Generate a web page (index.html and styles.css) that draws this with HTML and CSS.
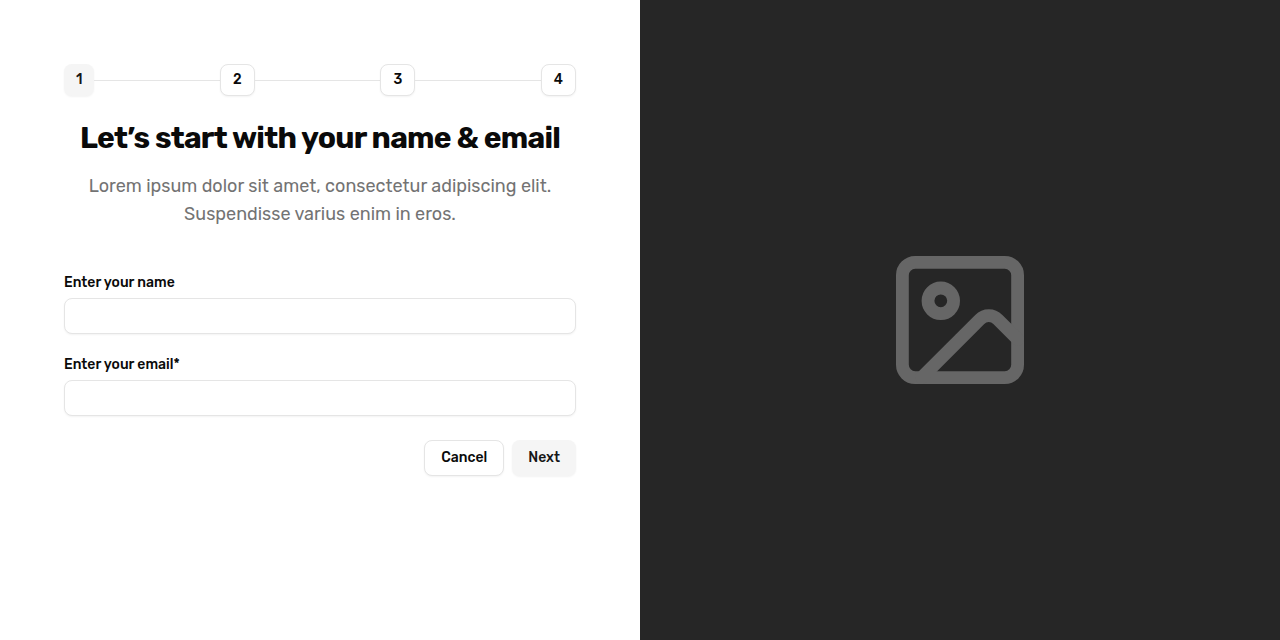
FILE: index.html
```html
<!DOCTYPE html>
<html lang="en">
<head>
<meta charset="utf-8">
<meta name="viewport" content="width=device-width, initial-scale=1">
<title>Sign up</title>
<link rel="stylesheet" href="styles.css">
</head>
<body>
<main class="page">
  <section class="panel">
    <nav class="steps" aria-label="Progress">
      <button type="button" class="button step primary" aria-current="step">1</button>
      <span class="line"></span>
      <button type="button" class="button step">2</button>
      <span class="line"></span>
      <button type="button" class="button step">3</button>
      <span class="line"></span>
      <button type="button" class="button step">4</button>
    </nav>
    <header class="intro">
      <h1 class="title">Let’s start with your name &amp; email</h1>
      <p class="lead">Lorem ipsum dolor sit amet, consectetur adipiscing elit. Suspendisse varius enim in eros.</p>
    </header>
    <form class="form">
      <div class="field">
        <label class="label" for="name">Enter your name</label>
        <input class="input" id="name" name="name" type="text">
      </div>
      <div class="field">
        <label class="label" for="email">Enter your email*</label>
        <input class="input" id="email" name="email" type="email" required>
      </div>
      <div class="actions">
        <button type="button" class="button">Cancel</button>
        <button type="submit" class="button primary">Next</button>
      </div>
    </form>
  </section>
  <aside class="media">
    <svg class="picture" viewBox="2 2 20 20" fill="none" stroke="currentColor" stroke-width="2" stroke-linecap="round" stroke-linejoin="round" aria-hidden="true">
      <rect x="3" y="3" width="18" height="18" rx="2"/>
      <circle cx="9" cy="9" r="2"/>
      <path d="m21 15-3.086-3.086a2 2 0 0 0-2.828 0L6 21"/>
    </svg>
  </aside>
</main>
</body>
</html>
```
FILE: styles.css
```css
*, *::before, *::after { box-sizing: border-box; }

body {
  margin: 0;
  background: #fff;
  color: #0a0a0a;
  font-family: Rubik, Inter, Roboto, sans-serif;
  font-size: 14px;
  line-height: 20px;
}

.page {
  display: grid;
  grid-template-columns: 1fr 1fr;
  min-height: 100vh;
}

.panel { padding: 64px; }

.steps {
  display: flex;
  align-items: center;
  margin-bottom: 24px;
}

.line {
  flex: 1;
  height: 1px;
  background: #e5e5e5;
}

.button {
  height: 36px;
  padding: 0 16px;
  border: 1px solid #e5e5e5;
  border-radius: 8px;
  background: #fff;
  box-shadow: 0 1px 2px rgb(0 0 0 / 5%);
  color: #0a0a0a;
  font: inherit;
  font-weight: 500;
}

.step {
  height: 32px;
  padding: 0 12px;
}

.primary {
  border: 0;
  background: #f5f5f5;
  color: #171717;
}

.intro {
  margin-bottom: 48px;
  text-align: center;
}

.title {
  margin: 0 0 16px;
  font-size: 30px;
  font-weight: 700;
  line-height: 36px;
  letter-spacing: -0.025em;
}

.lead {
  margin: 0;
  color: #737373;
  font-size: 18px;
  line-height: 28px;
}

.form {
  display: grid;
  gap: 24px;
}

.field {
  display: grid;
  gap: 8px;
}

.label {
  font-weight: 500;
  line-height: 14px;
}

.input {
  width: 100%;
  height: 36px;
  padding: 4px 12px;
  border: 1px solid #e5e5e5;
  border-radius: 8px;
  background: #fff;
  box-shadow: 0 1px 2px rgb(0 0 0 / 5%);
  color: inherit;
  font: inherit;
}

.actions {
  display: flex;
  justify-content: flex-end;
  gap: 8px;
}

.media {
  display: grid;
  place-items: center;
  background: #262626;
}

.picture {
  width: 128px;
  height: 128px;
  color: #666;
}
```
